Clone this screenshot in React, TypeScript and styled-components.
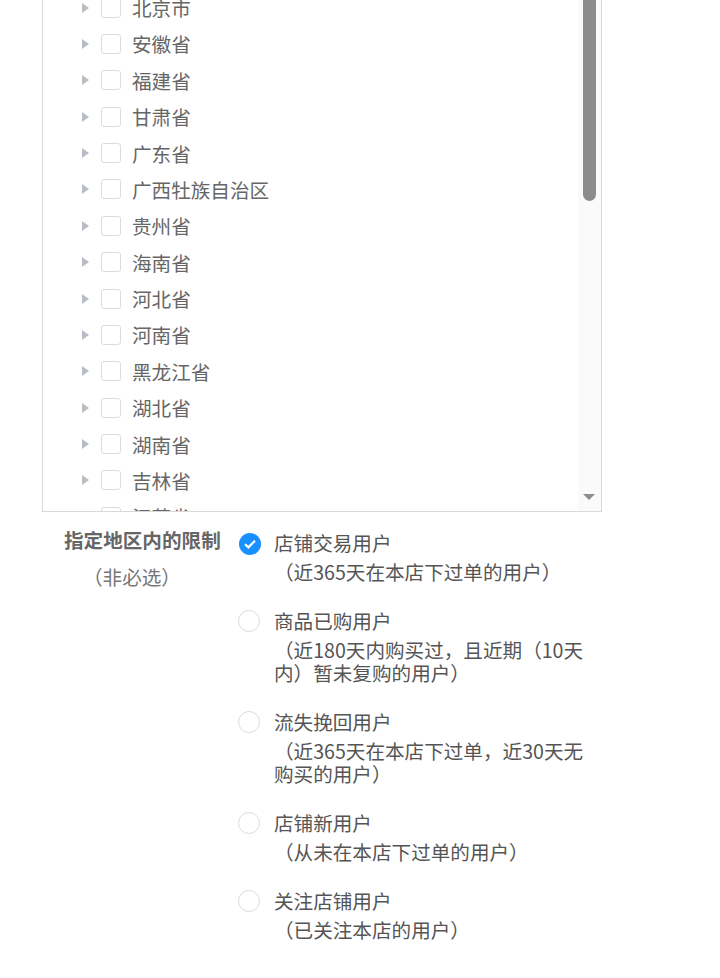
import React from 'react';
import styled, { createGlobalStyle } from 'styled-components';

const GlobalStyle = createGlobalStyle`
  html, body {
    margin: 0;
    padding: 0;
    background: #fff;
    overflow: hidden;
    font-family: "Noto Sans CJK SC", "Noto Sans", sans-serif;
  }
`;

const Page = styled.div`
  width: 720px;
  height: 978px;
  overflow: hidden;
`;

// caixa da lista, cortada no topo da página
const TreeBox = styled.div`
  display: flex;
  box-sizing: border-box;
  width: 560px;
  height: 512px;
  margin-left: 42px;
  border-left: 1px solid #d9d9d9;
  border-right: 1px solid #d9d9d9;
  border-bottom: 1px solid #d9d9d9;
  overflow: hidden;
`;

const TreeList = styled.ul`
  flex: 1;
  list-style: none;
  margin: -10.6px 0 0;
  padding: 0 0 0 39px;
`;

const TreeRow = styled.li`
  display: flex;
  align-items: center;
  height: 36.39px;
  font-size: 19.6px;
  color: #666;
`;

const Caret = styled.span`
  width: 0;
  height: 0;
  margin-right: 12px;
  border-top: 5px solid transparent;
  border-bottom: 5px solid transparent;
  border-left: 7px solid #b8bcc4;
`;

const CheckBox = styled.span`
  box-sizing: border-box;
  width: 20px;
  height: 20px;
  margin-right: 11px;
  border: 1px solid #dcdcdc;
  border-radius: 3px;
  background: #fff;
`;

const ScrollTrack = styled.div`
  display: flex;
  flex-direction: column;
  align-items: center;
  justify-content: space-between;
  width: 23px;
  background: #fafafa;
`;

const ScrollThumb = styled.div`
  width: 13px;
  height: 201px;
  border-radius: 0 0 7px 7px;
  background: #8c8c8c;
`;

const ScrollArrow = styled.span`
  width: 0;
  height: 0;
  margin-bottom: 11px;
  margin-right: 1px;
  border-left: 6px solid transparent;
  border-right: 6px solid transparent;
  border-top: 6px solid #8c8c8c;
`;

const LimitSection = styled.div`
  display: flex;
  margin-top: 14px;
`;

const LimitLabel = styled.div`
  display: flex;
  flex-direction: column;
  align-items: flex-start;
  box-sizing: border-box;
  width: 238px;
  padding-left: 64px;
`;

const LabelTitle = styled.div`
  font-size: 19.6px;
  font-weight: 700;
  line-height: 28px;
  color: #666;
  white-space: nowrap;
`;

const LabelHint = styled.div`
  margin-top: 9px;
  margin-left: 19px;
  font-size: 19.6px;
  line-height: 28px;
  color: #777;
  white-space: nowrap;
`;

const OptionList = styled.div`
  display: flex;
  flex-direction: column;
  gap: 24px;
  width: 346px;
  margin-top: 3px;
`;

const OptionRow = styled.div`
  display: flex;
  align-items: flex-start;
  gap: 14px;
`;

const RadioMark = styled.span<{ $checked?: boolean }>`
  flex: none;
  display: flex;
  align-items: center;
  justify-content: center;
  box-sizing: border-box;
  width: 22px;
  height: 22px;
  margin-top: 3px;
  border-radius: 50%;
  border: ${(p) => (p.$checked ? 'none' : '1px solid #dcdcdc')};
  background: ${(p) => (p.$checked ? '#1890ff' : '#fff')};
  transform: ${(p) => (p.$checked ? 'translate(1px, 1px)' : 'none')};
`;

const OptionBody = styled.div`
  flex: 1;
  color: #555;
  font-size: 19.6px;
`;

const OptionTitle = styled.div`
  line-height: 28px;
`;

const OptionDesc = styled.div`
  margin-top: 3px;
  line-height: 23px;
`;

const provinces = [
  '北京市', '安徽省', '福建省', '甘肃省', '广东省', '广西牡族自治区', '贵州省', '海南省',
  '河北省', '河南省', '黑龙江省', '湖北省', '湖南省', '吉林省', '江苏省',
];

const options = [
  { title: '店铺交易用户', desc: '（近365天在本店下过单的用户）', checked: true },
  { title: '商品已购用户', desc: '（近180天内购买过，且近期（10天内）暂未复购的用户）' },
  { title: '流失挽回用户', desc: '（近365天在本店下过单，近30天无购买的用户）' },
  { title: '店铺新用户', desc: '（从未在本店下过单的用户）' },
  { title: '关注店铺用户', desc: '（已关注本店的用户）' },
];

const App: React.FC = () => {
  return (
    <Page>
      <GlobalStyle />
      <TreeBox>
        <TreeList>
          {provinces.map((name) => (
            <TreeRow key={name}>
              <Caret />
              <CheckBox />
              {name}
            </TreeRow>
          ))}
        </TreeList>
        <ScrollTrack>
          <ScrollThumb />
          <ScrollArrow />
        </ScrollTrack>
      </TreeBox>

      <LimitSection>
        <LimitLabel>
          <LabelTitle>指定地区内的限制</LabelTitle>
          <LabelHint>（非必选）</LabelHint>
        </LimitLabel>
        <OptionList>
          {options.map((opt) => (
            <OptionRow key={opt.title}>
              <RadioMark $checked={opt.checked}>
                {opt.checked && (
                  <svg width="14" height="12" viewBox="0 0 14 12" fill="none">
                    <path d="M2 6.2 L5.4 9.4 L12 2.8" stroke="#fff" strokeWidth="2.2" />
                  </svg>
                )}
              </RadioMark>
              <OptionBody>
                <OptionTitle>{opt.title}</OptionTitle>
                <OptionDesc>{opt.desc}</OptionDesc>
              </OptionBody>
            </OptionRow>
          ))}
        </OptionList>
      </LimitSection>
    </Page>
  );
};

export default App;
